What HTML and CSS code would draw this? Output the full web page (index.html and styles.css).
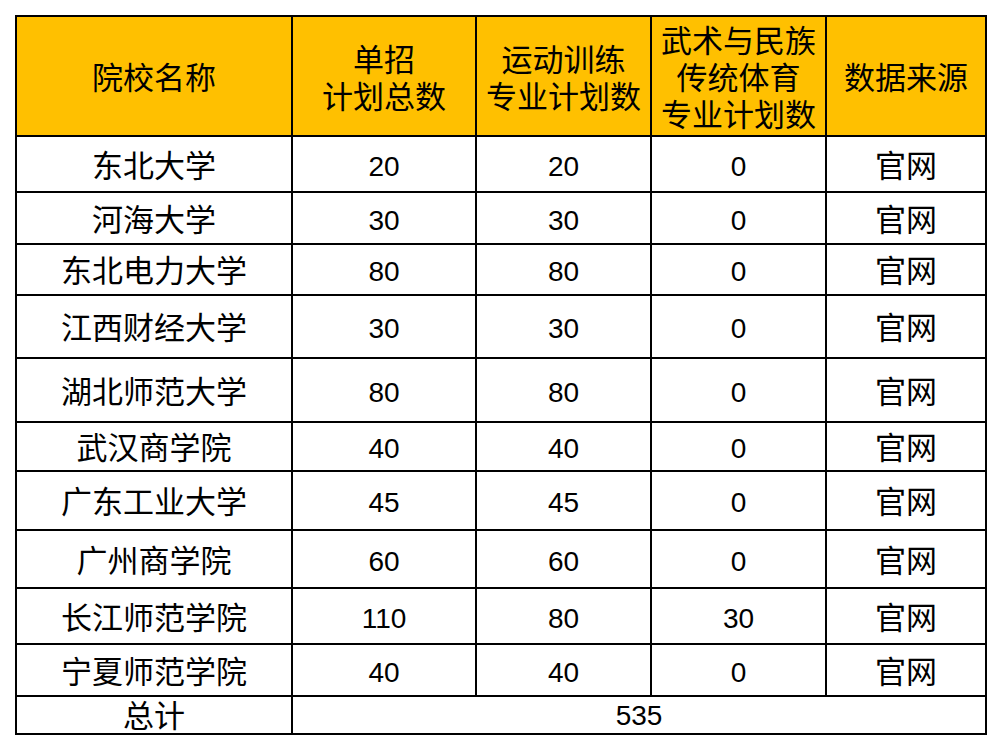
FILE: index.html
```html
<!DOCTYPE html>
<html lang="zh-CN">
<head>
<meta charset="utf-8">
<title>单招计划</title>
<link rel="stylesheet" href="styles.css">
</head>
<body>
<div class="sheet">
  <div class="cell head">院校名称</div>
  <div class="cell head">单招<br>计划总数</div>
  <div class="cell head">运动训练<br>专业计划数</div>
  <div class="cell head">武术与民族<br>传统体育<br>专业计划数</div>
  <div class="cell head">数据来源</div>

  <div class="cell zh">东北大学</div><div class="cell num">20</div><div class="cell num">20</div><div class="cell num">0</div><div class="cell zh">官网</div>
  <div class="cell zh">河海大学</div><div class="cell num">30</div><div class="cell num">30</div><div class="cell num">0</div><div class="cell zh">官网</div>
  <div class="cell zh">东北电力大学</div><div class="cell num">80</div><div class="cell num">80</div><div class="cell num">0</div><div class="cell zh">官网</div>
  <div class="cell zh">江西财经大学</div><div class="cell num">30</div><div class="cell num">30</div><div class="cell num">0</div><div class="cell zh">官网</div>
  <div class="cell zh">湖北师范大学</div><div class="cell num">80</div><div class="cell num">80</div><div class="cell num">0</div><div class="cell zh">官网</div>
  <div class="cell zh">武汉商学院</div><div class="cell num">40</div><div class="cell num">40</div><div class="cell num">0</div><div class="cell zh">官网</div>
  <div class="cell zh">广东工业大学</div><div class="cell num">45</div><div class="cell num">45</div><div class="cell num">0</div><div class="cell zh">官网</div>
  <div class="cell zh">广州商学院</div><div class="cell num">60</div><div class="cell num">60</div><div class="cell num">0</div><div class="cell zh">官网</div>
  <div class="cell zh">长江师范学院</div><div class="cell num">110</div><div class="cell num">80</div><div class="cell num">30</div><div class="cell zh">官网</div>
  <div class="cell zh">宁夏师范学院</div><div class="cell num">40</div><div class="cell num">40</div><div class="cell num">0</div><div class="cell zh">官网</div>

  <div class="cell zh total-label">总计</div>
  <div class="cell num total-value">535</div>
</div>
</body>
</html>
```

FILE: styles.css
```css
html, body {
  margin: 0;
  padding: 0;
  background: #ffffff;
}

body {
  padding: 15px;
  font-family: "Liberation Sans", "Noto Sans CJK SC", sans-serif;
  color: #000000;
}

.sheet {
  display: grid;
  width: max-content;
  grid-template-columns: 274px 182px 173px 173px 158px;
  grid-template-rows: 118px 54px 50px 49px 61px 62px 47px 57px 56px 54px 50px 36px;
  gap: 2px;
  padding: 2px;
  background: #000000;
}

.cell {
  background: #ffffff;
  display: flex;
  align-items: center;
  justify-content: center;
  text-align: center;
  overflow: hidden;
}

.head {
  background: #ffc000;
  font-size: 31px;
  line-height: 37px;
  padding-top: 5px;
}

.zh {
  font-size: 31px;
  line-height: 36px;
  padding-top: 5px;
}

.num {
  font-size: 28px;
  line-height: 32px;
  padding-top: 5px;
}

.total-label {
  padding-top: 3px;
  line-height: 33px;
}

.total-value {
  grid-column: 2 / span 4;
  padding-top: 2px;
}
```
